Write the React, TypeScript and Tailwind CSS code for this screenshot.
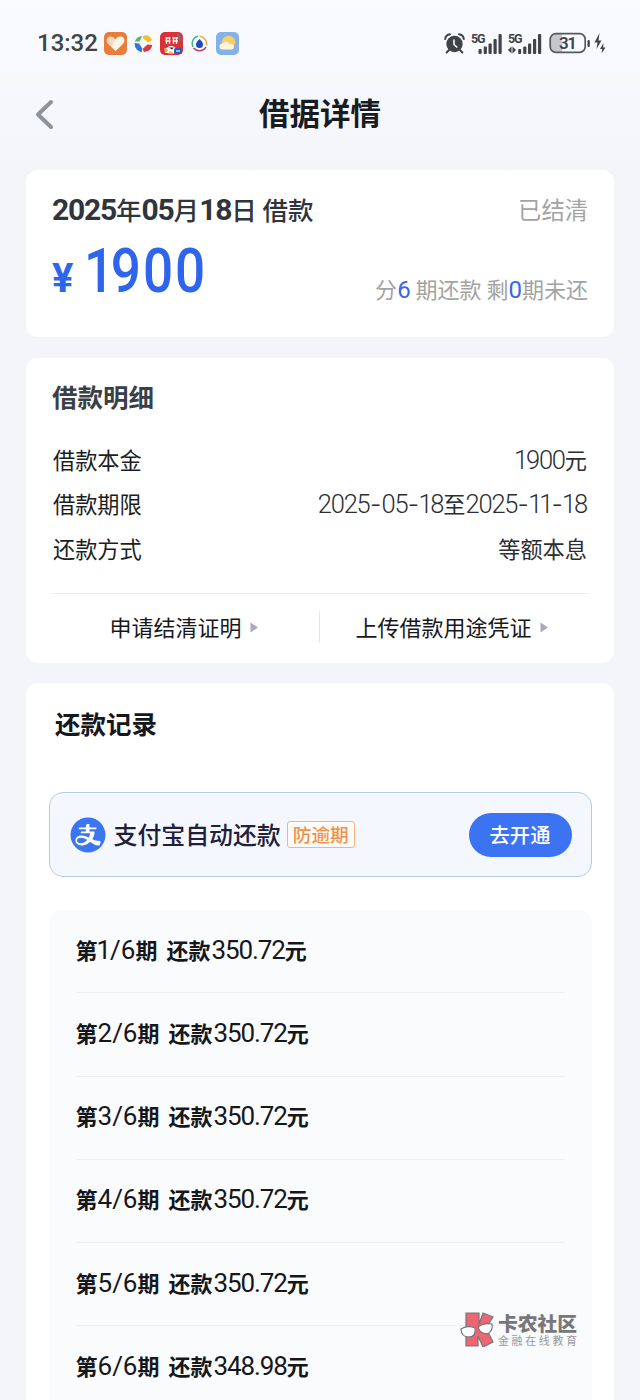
import { ReactNode } from "react"
import { AiFillAlipayCircle } from "react-icons/ai"
import clsx from "clsx"

const details = [
    { label: "借款本金", value: "1900元" },
    { label: "借款期限", value: "2025-05-18至2025-11-18" },
    { label: "还款方式", value: "等额本息" },
]

const records = [
    { term: 1, amount: "350.72" },
    { term: 2, amount: "350.72" },
    { term: 3, amount: "350.72" },
    { term: 4, amount: "350.72" },
    { term: 5, amount: "350.72" },
    { term: 6, amount: "348.98" },
]

function Num({ children, className }: { children: ReactNode, className?: string }) {
    return <span className={clsx("font-['Roboto',sans-serif] leading-none", className)}>{children}</span>
}

// the figure one is set narrower than the other digits
function Digits({ value }: { value: string }) {
    return (
        <>
            {value.split(/(1)/).filter(Boolean).map((part, i) => (
                part === "1" ? <span key={i} className="-mx-[0.04em]">1</span> : part
            ))}
        </>
    )
}

// digits and dashes are set in the number font, everything else stays in the CJK one
function DetailValue({ value }: { value: string }) {
    return (
        <span className="whitespace-nowrap text-[#2b2e33]">
            {value.split(/(\d+|-)/).filter(Boolean).map((part, i) => {
                if (part === "-") return <span key={i} className="inline-block w-[12px] text-center font-['Inter',sans-serif] text-[25px] leading-none font-light">-</span>
                if (/\d/.test(part)) return <Num key={i} className="text-[25.5px] font-[350] tracking-[-1.2px]"><Digits value={part} /></Num>
                return <span key={i}>{part}</span>
            })}
        </span>
    )
}

function Arrow() {
    return (
        <svg className="mt-[2px] ml-2 h-[11px] w-2" viewBox="0 0 8 11">
            <path d="M0.5 0.5 8 5.5 0.5 10.5Z" fill="#a9a9bd" />
        </svg>
    )
}

function HeartIcon() {
    return (
        <svg className="size-[23px]" viewBox="0 0 23 23">
            <rect width="23" height="23" rx="5" fill="#e77c3b" />
            <path d="M11.5 19 4.2 12C1.2 8.7 3 4.5 6.5 4.5c2.2 0 3.8 1.2 5 3 1.2-1.8 2.8-3 5-3 3.5 0 5.3 4.2 2.3 7.5Z" fill="#fbd8bd" />
            <path d="M11.5 7.5c1.2-1.8 2.8-3 5-3 3.5 0 5.3 4.2 2.3 7.5L11.5 19 7 14.5Z" fill="#fff3e8" />
        </svg>
    )
}

function PinwheelIcon() {
    return (
        <svg className="h-[19px] w-[19px]" viewBox="0 0 19 19">
            <path d="M.8 7.5C2 4 4.5 2.3 8.300 2L5.500 7.500Z" fill="#58b66c" />
            <path d="M9 2C12.500.3 16.500 2 18 6l-3.500 2.500L9 4.500Z" fill="#f3bd35" />
            <path d="M18.200 11c-.5 4-3.500 6.700-8.200 7L8.500 15l5-4.500Z" fill="#d83a4d" />
            <path d="M.7 9 5 9.500 8 14v4C3.500 17.500.5 14 .7 9Z" fill="#3173dd" />
        </svg>
    )
}

function MahjongIcon() {
    return (
        <svg className="size-[23px]" viewBox="0 0 23 23">
            <rect width="23" height="23" rx="5" fill="#dc3038" />
            <path d="M17 1.5a5 5 0 0 1 5 5V10l-5-3Z" fill="#8d6172" />
            <path d="M5.5 6h5M5.5 9h5M6.5 5v7M9.5 5v7M12.5 6h5.5M12.5 9h5.5M13.5 5v7M16.5 5v7" stroke="#fff0dc" strokeWidth="1.3" />
            <path d="M5 21c0-5 2.5-7 6-7s6 2 6.5 7Z" fill="#fff" />
            <path d="M4 15.5 8.5 18 5 21ZM10 19l5 3h-7Z" fill="#f2ae35" />
            <path d="M9 15.5h5l-2 2Z" fill="#222" />
            <rect x="14" y="16" width="8" height="6" rx="1.5" fill="#3157b7" />
            <path d="M16 19h4" stroke="#dfe8ff" strokeWidth="1.3" />
        </svg>
    )
}

function DropIcon() {
    return (
        <svg className="size-[17px]" viewBox="0 0 17 17" fill="none" strokeWidth="1.5">
            <path d="M2 12C0 7 2.5 2 7 1.3" stroke="#4aae91" />
            <path d="M8.5 1.2C13 1.5 16.5 6 15.5 10.5" stroke="#e3ad48" />
            <path d="M2.5 13C6 17 12.5 16.5 15 12" stroke="#bb3f72" />
            <path d="M8.5 4c2 2 3.5 3.5 3.5 5.6a3.5 3.5 0 0 1-7 0C5 7.5 6.5 6 8.5 4Z" fill="#1c4bbd" />
        </svg>
    )
}

function WeatherIcon() {
    return (
        <svg className="size-[23px]" viewBox="0 0 23 23">
            <rect width="23" height="23" rx="5" fill="#82b2e9" />
            <circle cx="12.5" cy="10.5" r="6.8" fill="#f6cf69" />
            <path d="M6.5 17.5a3 3 0 0 1 0-6 4 4 0 0 1 7 .8 2.6 2.6 0 0 1 2.5 5.2Z" fill="#fff6dd" />
        </svg>
    )
}

function AlarmIcon() {
    return (
        <svg className="h-[21px] w-[21px]" viewBox="0 0 21 21">
            <circle cx="10.5" cy="11" r="8.2" fill="#404348" />
            <path d="M1.2 6C1.5 3.5 3.3 1.6 6 1.3M19.8 6C19.5 3.5 17.7 1.6 15 1.3M5 17l-2.3 2.5M16 17l2.3 2.5" stroke="#404348" strokeWidth="2" strokeLinecap="round" fill="none" />
            <path d="M10 6.5v5l3.3 3" stroke="#f9faff" strokeWidth="1.6" fill="none" />
        </svg>
    )
}

function Signal({ data }: { data?: boolean }) {
    return (
        <svg className={clsx("h-[23px]", data ? "w-[35px]" : "w-[33px]")} viewBox={data ? "0 0 35 23" : "0 0 33 23"} fill="#404348">
            <text x="0" y="10.5" fontFamily="Roboto" fontSize="12.5" fontWeight="700" textLength="14.5">5G</text>
            {data ? (
                <path d="M0 18 3.5 14.5v7ZM8 18 4.500 21.5v-7Z" />
            ) : (
                <rect x="7.5" y="17" width="3.2" height="5" rx="1" />
            )}
            <g transform={data ? "translate(2.5 0)" : undefined}>
                {data && <rect x="7.700" y="17" width="3" height="5" rx="1" />}
                <rect x="12.7" y="14.5" width="3.2" height="7.5" rx="1" />
                <rect x="17.5" y="11.5" width="3.2" height="10.5" rx="1" />
                <rect x="22.5" y="7" width="3.2" height="15" rx="1" />
                <rect x="27.5" y="2" width="3.2" height="20" rx="1" />
            </g>
        </svg>
    )
}

function Battery() {
    return (
        <svg className="ml-1.5 h-[22px] w-[58px]" viewBox="0 0 58 22">
            <path d="M7 2h6v18H7a5 5 0 0 1-5-5V7a5 5 0 0 1 5-5Z" fill="#c5c7cd" />
            <rect x="1.2" y="1.7" width="35" height="18.6" rx="5.5" fill="none" stroke="#55585e" strokeWidth="1.7" />
            <text x="10" y="17" fontFamily="Roboto" fontSize="17" fontWeight="600" fill="#404348" textLength="18">31</text>
            <rect x="38.5" y="8" width="2.3" height="7" rx="1" fill="#404348" />
            <path d="M50.5 1 45.5 10.5h3L47.5 17l5-8.5h-3ZM54.5 11l-3.5 6h2.3L52.5 21.5l4-6h-2.3Z" fill="#404348" />
        </svg>
    )
}

function StatusBar() {
    return (
        <div className="flex h-[86px] items-center justify-between pr-[33px] pl-[37px] text-[#404348]">
            <div className="flex items-center">
                <Num className="w-[67px] text-[24px] font-medium">13:32</Num>
                <HeartIcon />
                <div className="ml-[7px] flex items-center gap-[7px]">
                    <PinwheelIcon />
                    <MahjongIcon />
                </div>
                <div className="ml-2 flex items-center gap-2">
                    <DropIcon />
                    <WeatherIcon />
                </div>
            </div>
            <div className="flex items-center">
                <AlarmIcon />
                <div className="ml-1.5 flex items-center gap-1">
                    <Signal />
                    <Signal data />
                </div>
                <Battery />
            </div>
        </div>
    )
}

function Header() {
    return (
        <div className="relative flex h-[84px] justify-center pt-[7px]">
            <svg className="absolute top-[13px] left-[34px] h-8 w-5" viewBox="0 0 20 32">
                <path d="M17 3 4 15.5 17 28" fill="none" stroke="#8e9299" strokeWidth="4" strokeLinecap="round" strokeLinejoin="round" />
            </svg>
            <h1 className="text-[30.5px] leading-[38px] font-bold text-[#171b22]">借据详情</h1>
        </div>
    )
}

function Summary() {
    return (
        <section className="h-[167px] rounded-xl bg-white px-[26px] pt-[20px]">
            <div className="flex h-[38px] items-center justify-between whitespace-nowrap">
                <div className="text-[25.5px] leading-[38px] font-medium text-[#30353b]">
                    <Num className="text-[30px] font-bold tracking-[-1.2px]">2025</Num>年
                    <Num className="text-[30px] font-bold tracking-[-1.2px]">05</Num>月
                    <Num className="text-[30px] font-bold tracking-[-1.2px]">18</Num>日 借款
                </div>
                <span className="text-[23.3px] leading-[38px] text-[#a3a3a3]">已结清</span>
            </div>
            <div className="mt-[13px] flex h-[66px] justify-between whitespace-nowrap">
                <div className="flex items-baseline text-[#2f65ed]">
                    <Num className="w-[32px] text-[40px] font-bold">¥</Num>
                    <Num className="origin-left scale-x-[0.87] text-[61px] font-medium tracking-[2.2px]">
                        <span className="tracking-[-3.8px]">1</span>900
                    </Num>
                </div>
                <div className="self-end text-[22px] leading-[38px] text-[#a3a3a3]">
                    分<Num className="text-[24px] text-[#3b65e8]">6</Num> 期还款 剩<Num className="text-[24px] text-[#3b65e8]">0</Num>期未还
                </div>
            </div>
        </section>
    )
}

function Details() {
    return (
        <section className="mt-[21px] h-[305px] rounded-xl bg-white px-[26px] pt-[19px]">
            <h2 className="text-[25.5px] leading-[38px] font-bold text-[#3a4047]">借款明细</h2>
            <div className="mt-[22px]">
                {details.map((item) => (
                    <div key={item.label} className="flex h-[44.3px] items-center justify-between pr-px pl-px text-[22.2px] leading-[44px] text-[#1c1e22]">
                        <span>{item.label}</span>
                        <DetailValue value={item.value} />
                    </div>
                ))}
            </div>
            <div className="mt-[23px] flex h-[68px] items-center border-t border-[#ececef] text-[22px] text-[#16181c]">
                <div className="flex w-[267px] items-center justify-center pr-[4px] pb-[2px]">
                    申请结清证明<Arrow />
                </div>
                <div className="h-8 w-px bg-[#e6e6ea]" />
                <div className="flex flex-1 items-center justify-center pr-[5px] pb-[2px]">
                    上传借款用途凭证<Arrow />
                </div>
            </div>
        </section>
    )
}

function AutoRepay() {
    return (
        <div className="mt-[49px] flex h-[85px] items-center rounded-[14px] border border-[#b4cbe8] bg-[#f4f7fd] pr-[19px] pl-[21px] whitespace-nowrap">
            <div className="flex size-[34px] items-center justify-center rounded-full bg-white">
                <AiFillAlipayCircle className="size-[40px] shrink-0 text-[#3a75f2]" />
            </div>
            <span className="ml-[9px] pb-[2px] text-[23.9px] font-medium text-[#20203a]">支付宝自动还款</span>
            <span className="ml-[6px] flex h-[27px] w-[68px] items-center justify-center rounded-[3px] border border-[#f3b481] bg-[#fffaf5] text-[18.7px] font-medium text-[#ee914e]">防逾期</span>
            <button className="ml-auto h-[44px] w-[103px] rounded-full bg-[#3c73f3] text-[20.3px] font-medium text-white">去开通</button>
        </div>
    )
}

function Records() {
    return (
        <section className="mt-[20px] h-[740px] rounded-t-xl bg-white px-[22.5px] pt-[20px]">
            <h2 className="pl-[6.5px] text-[25.5px] leading-[40px] font-bold text-[#15181c]">还款记录</h2>
            <AutoRepay />
            <div className="mt-[33px] rounded-t-[14px] bg-[#fafbfd] px-[27px]">
                {records.map((record) => (
                    <div key={record.term} className="h-[83.3px] border-b border-[#eeeff2] pt-[18.500px] text-[22px] leading-[40px] font-bold whitespace-nowrap text-[#15171b]">
                        第<Num className="text-[26px] font-[450]"><Digits value={`${record.term}/6`} /></Num>期
                        <span className="ml-[9px]">还款</span>
                        <Num className="ml-px text-[26px] font-[450] tracking-[-1.1px]">{record.amount}</Num>元
                    </div>
                ))}
            </div>
        </section>
    )
}

function Watermark() {
    return (
        <div className="absolute top-[1311px] left-[459px] flex items-center">
            <svg className="h-9 w-[36px]" viewBox="0 0 36 36" stroke="#77747a" strokeWidth="1.2">
                <path d="M7 2h13v11L24 2l10 4-7 11 7 14-10 5-5-11v10H7Z" fill="#ed6672" />
                <path d="M2 18c4-3 10-3 14-1 1 5-1 9-6 9-5 0-8-3-8-8ZM19 16c4-3 9-4 14-3 1 4-1 8-4 9.5-5 1-9-2-10-6.5Z" fill="#fff" />
            </svg>
            <div className="ml-[3px] whitespace-nowrap text-[#77777b]">
                <div className="text-[19.8px] leading-[21px] font-black">卡农社区</div>
                <div className="mt-px text-[11px] leading-[13px] tracking-[2.6px] text-[#98989c]">金融在线教育</div>
            </div>
        </div>
    )
}

export default function App() {
    return (
        <div className="relative h-[1400px] w-[640px] overflow-hidden bg-[#f4f5fa] font-['Noto_Sans_CJK_SC',sans-serif]">
            <div className="bg-linear-to-b from-[#fafbff] to-[#f4f5fa]">
                <StatusBar />
                <Header />
            </div>
            <main className="px-[26px]">
                <Summary />
                <Details />
                <Records />
            </main>
            <Watermark />
        </div>
    )
}
